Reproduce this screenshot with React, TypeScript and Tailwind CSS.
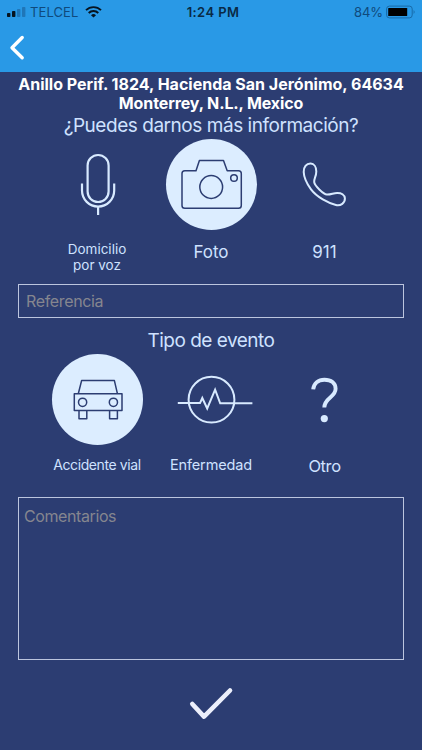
import React from "react";

interface OptionProps {
  label: React.ReactNode;
  labelClass: string;
  active?: boolean;
  children: React.ReactNode;
}

function Option({ label, labelClass, active, children }: OptionProps) {
  return (
    <button className="flex flex-col items-center">
      <span className={`block w-[91px] h-[91px] rounded-full ${active ? "bg-[#dcedff] text-[#2c3d72]" : "text-[#d8eaff]"}`}>
        <svg viewBox="0 0 91 91" className="w-full h-full" fill="none" stroke="currentColor" strokeWidth="1.5" strokeLinejoin="round">
          {children}
        </svg>
      </span>
      <span className={`block whitespace-nowrap text-[#cfe2ff] ${labelClass}`}>{label}</span>
    </button>
  );
}

function StatusBar() {
  return (
    <div className="grid grid-cols-3 items-center h-6 pl-[7px] pr-[6px] text-[13px] leading-6">
      <div className="flex items-center text-[#0f4a7c]">
        <svg width="20" height="12" viewBox="0 0 20 12">
          <rect x="0" y="7" width="3.4" height="4" rx="0.8" fill="#061420" />
          <rect x="5" y="5" width="3.4" height="6" rx="0.8" fill="#061420" />
          <rect x="10" y="3" width="3.4" height="8" rx="0.8" fill="#1f76b8" />
          <rect x="15" y="1" width="3.4" height="10" rx="0.8" fill="#1f76b8" />
        </svg>
        <span className="ml-[3px] tracking-[0.1px]">TELCEL</span>
        <svg className="ml-[7px]" width="17" height="12" viewBox="0 0 17 12" fill="none" stroke="#061420" strokeWidth="1.9">
          <path d="M1 4.2 A10.6 10.6 0 0 1 16 4.2" />
          <path d="M3.7 7 A6.8 6.8 0 0 1 13.3 7" />
          <path d="M8.5 11.6 L6 9.2 A3.5 3.5 0 0 1 11 9.2 Z" fill="#061420" stroke="none" />
        </svg>
      </div>
      <div className="text-center font-semibold text-[#0a2a45] tracking-[0.4px] pl-[3px]">1:24 PM</div>
      <div className="flex items-center justify-end text-[#0f4a7c]">
        <span className="tracking-[-0.1px]">84%</span>
        <svg className="ml-[3px]" width="30" height="14" viewBox="0 0 30 14">
          <rect x="0.6" y="1.1" width="25.6" height="11.8" rx="2.8" fill="none" stroke="#176aa8" strokeWidth="1" />
          <rect x="2.2" y="3" width="19" height="8" rx="0.6" fill="#000" />
          <path d="M27.6 5 Q29.6 7 27.6 9 Z" fill="#176aa8" />
        </svg>
      </div>
    </div>
  );
}

export default function App() {
  return (
    <div className="w-[422px] h-[750px] overflow-hidden bg-[#2c3d72] font-['Inter',sans-serif]">
      <header className="h-[72px] bg-[#2999e6]">
        <StatusBar />
        <button className="block pl-[9px] pt-[10px]" aria-label="Atrás">
          <svg width="18" height="28" viewBox="0 0 18 28" fill="none" stroke="#fff" strokeWidth="3.4" strokeLinecap="round" strokeLinejoin="round">
            <path d="M13.2 3.5 L3 13.7 L13.2 23.7" />
          </svg>
        </button>
      </header>

      <main className="flex flex-col px-[18px]">
        <p className="mt-[3px] text-center text-[16px] leading-[18.5px] font-bold text-white whitespace-nowrap">
          Anillo Perif. 1824, Hacienda San Jerónimo, 64634
          <br />
          <span className="tracking-[-0.12px]">Monterrey, N.L., Mexico</span>
        </p>
        <h2 className="h-[27px] text-center text-[19px] leading-[28px] tracking-[-0.46px] text-[#cfe2ff]">¿Puedes darnos más información?</h2>

        <div className="h-[145px] self-center grid grid-cols-3 w-[342px]">
          <Option label={<>Domicilio<br />por voz</>} labelClass="mt-[11px] text-[13.5px] leading-4">
            <rect x="35.6" y="16" width="21" height="47" rx="10.5" strokeWidth="2.2" />
            <path d="M30 44.5 V51.5 A16.1 16.1 0 0 0 62.2 51.5 V44.5 M46.1 67.5 V76" strokeWidth="2.2" />
          </Option>
          <Option label="Foto" labelClass="mt-3 text-[17px] leading-5" active>
            <path d="M18.8 31.7 H30 L33.4 21.5 H57.5 L61.2 31.7 H72.5 Q75.3 31.7 75.3 34.5 V66.4 Q75.3 69.2 72.5 69.2 H18.8 Q16 69.2 16 66.4 V34.5 Q16 31.7 18.8 31.7 Z" />
            <circle cx="45.2" cy="48" r="11.4" />
            <circle cx="68" cy="39" r="3.3" />
          </Option>
          <Option label="911" labelClass="mt-3 pr-px text-[17px] leading-5">
            <path d="M30.7 24.6 C26.3 24.4 23.5 28.3 23.7 33 C23.9 38.3 26.8 44.6 31 50.4 C36.9 58.2 48.3 64.2 55.9 66 C60.7 67.1 65.1 64 64.9 59.4 C64.7 55.7 61.3 53.8 57.1 53.9 C53.3 54 50.9 55.8 46.9 55.6 C43.7 55.4 34.7 47 34.2 43.2 C33.7 40 36.3 37.6 36.3 32.4 C36.3 28 33.9 24.8 30.7 24.6 Z" strokeWidth="2" />
          </Option>
        </div>

        <input
          className="block w-[386px] h-[34px] border border-[#bcc5de] bg-transparent pl-[7px] text-[16px] tracking-[-0.35px] text-white placeholder:text-[#85868f] outline-none"
          placeholder="Referencia"
        />
        <h2 className="mt-[9px] h-[27px] text-center text-[19px] leading-[27px] tracking-[-0.5px] text-[#cfe2ff]">Tipo de evento</h2>

        <div className="h-[143px] self-center grid grid-cols-3 w-[342px]">
          <Option label="Accidente vial" labelClass="mt-[10px] text-[14px] tracking-[-0.4px] leading-5" active>
            <path d="M26.3 39.7 L29.6 26.6 H62.4 L65.4 39.7 M22.3 39.7 H70 V56.6 H22.3 Z M27 56.6 V64.8 H34.8 V56.6 M57.6 56.6 V64.8 H65.4 V56.6" />
            <circle cx="30.6" cy="48.3" r="4.1" />
            <circle cx="61.4" cy="48.3" r="4.1" />
          </Option>
          <Option label="Enfermedad" labelClass="mt-[10px] text-[14.5px] tracking-[-0.15px] leading-5">
            <circle cx="45.5" cy="45.7" r="22.9" strokeWidth="2" />
            <path d="M11.8 49.1 H34 L36.3 44 L41.2 54.5 L49.1 35.6 L54.2 49.3 H86.4" strokeWidth="2" strokeLinejoin="miter" />
          </Option>
          <Option label="Otro" labelClass="mt-[11px] pr-px text-[16.5px] tracking-[-0.4px] leading-5">
            <path d="M33.2 35.4 C33.8 29 38.4 25.7 44.4 25.7 C51 25.7 55.6 29 55.6 34.8 C55.6 43.6 44.3 43.4 44.3 53.6" strokeWidth="3.9" />
            <circle cx="44.3" cy="64.6" r="3.6" fill="currentColor" stroke="none" />
          </Option>
        </div>

        <textarea
          className="block w-[386px] h-[163px] resize-none border border-[#bcc5de] bg-transparent pl-[5px] pt-[6px] text-[16px] tracking-[-0.4px] leading-6 text-white placeholder:text-[#85868f] outline-none"
          placeholder="Comentarios"
        />

        <button className="self-center mt-[24px]" aria-label="Enviar">
          <svg width="50" height="40" viewBox="0 0 50 40" fill="none" stroke="#eceffb" strokeWidth="4.6" strokeLinecap="round" strokeLinejoin="round">
            <path d="M6.3 20 L18 32.6 L44 6.5" />
          </svg>
        </button>
      </main>
    </div>
  );
}
